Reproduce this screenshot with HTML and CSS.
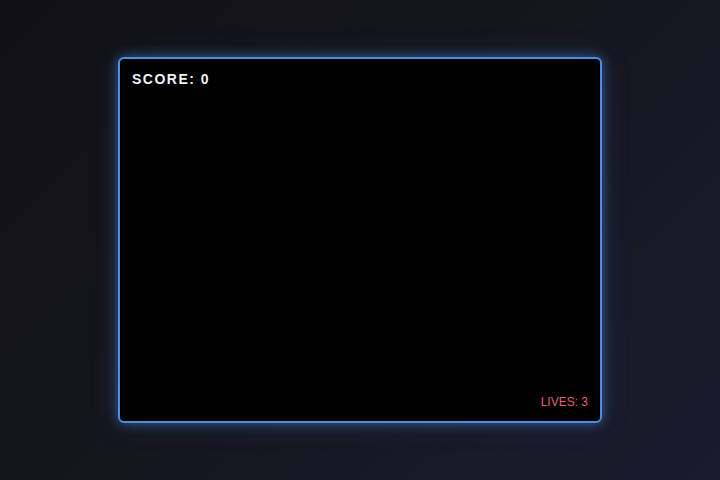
FILE: index.html
```html
<!DOCTYPE html>
<html>
<head>
<meta charset="utf-8">
<link rel="stylesheet" href="styles.css">
</head>
<body>
<div class="stage">
  <div class="game">
    <div class="score">SCORE: 0</div>
    <div class="lives">LIVES: 3</div>
  </div>
</div>
</body>
</html>
```
FILE: styles.css
```css
html, body {
  margin: 0;
  padding: 0;
  height: 100%;
}
body {
  background: linear-gradient(135deg, #111114 0%, #16161f 50%, #1b1b2e 100%);
  font-family: "Liberation Sans", Arial, sans-serif;
}
.stage {
  height: 100%;
  display: flex;
  align-items: center;
  justify-content: center;
}
.game {
  background: #000;
  border: 2px solid #4a8fe0;
  border-radius: 6px;
  box-shadow: 0 0 12px rgba(74, 143, 224, 0.55), 0 0 30px rgba(74, 143, 224, 0.15);
  display: flex;
  flex-direction: column;
  justify-content: space-between;
  padding: 12px;
  box-sizing: content-box;
  width: 456px;
  height: 338px;
}
.score {
  color: #eef3f8;
  font-weight: bold;
  font-size: 14px;
  letter-spacing: 1.5px;
}
.lives {
  align-self: flex-end;
  color: #e0606e;
  font-size: 12px;
}
```
